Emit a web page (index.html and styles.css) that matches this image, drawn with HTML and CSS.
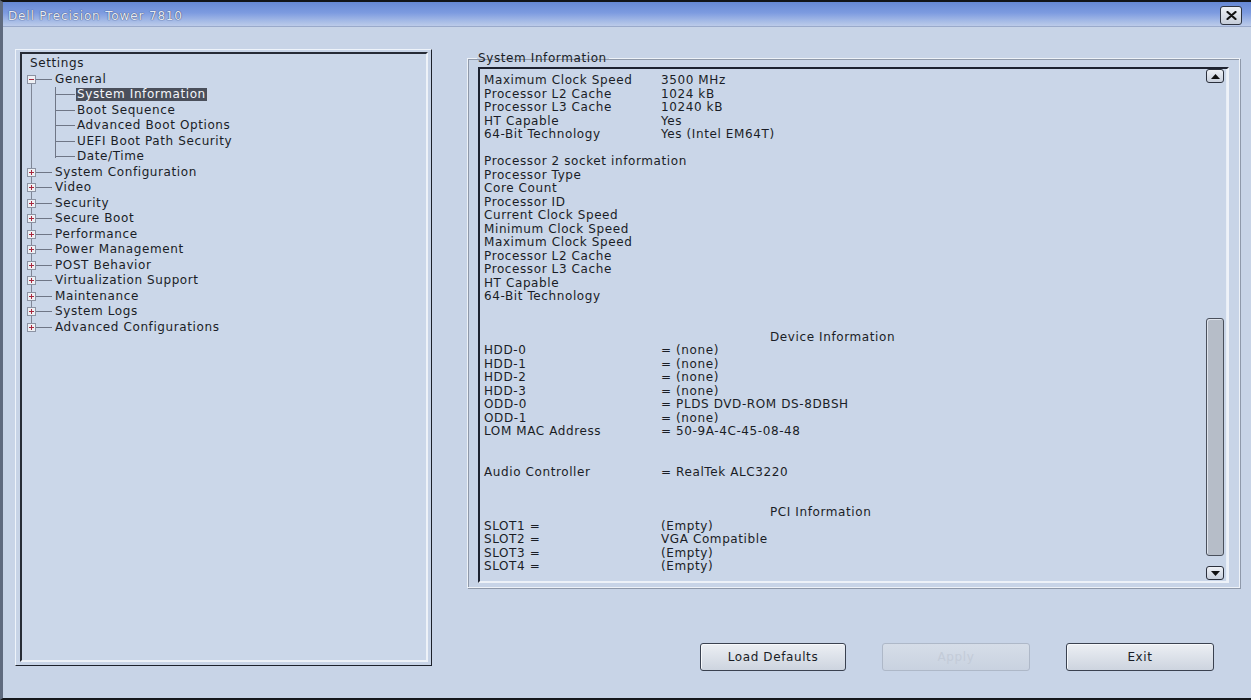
FILE: index.html
```html
<!DOCTYPE html>
<html lang="en">
<head>
<meta charset="utf-8">
<title>Dell Precision Tower 7810</title>
<link rel="stylesheet" href="styles.css">
</head>
<body>
<div class="screen">
  <div class="titlebar">
    <span class="title">Dell Precision Tower 7810</span>
    <button class="close" aria-label="Close">
      <svg width="11" height="9" viewBox="0 0 11 9"><path d="M1.5 1 L9.5 8 M9.5 1 L1.5 8" stroke="#111" stroke-width="2.2" stroke-linecap="round"/></svg>
    </button>
  </div>
  <div class="main">
    <div class="lpanel">
      <div class="lpanel-inner">
        <div class="tree-root">Settings</div>
        <div class="tree-level">
          <div class="row">
            <svg class="tg" width="9" height="9" viewBox="0 0 9 9"><rect x=".5" y=".5" width="8" height="8" fill="#eef0f4" stroke="#8b92a2"/><path d="M2 4.5h5" stroke="#a8283e"/></svg>
            <span class="hline"></span><span class="label">General</span>
          </div>
          <div class="children">
            <div class="row"><span class="hline2"></span><span class="label sel">System Information</span></div>
            <div class="row"><span class="hline2"></span><span class="label">Boot Sequence</span></div>
            <div class="row"><span class="hline2"></span><span class="label">Advanced Boot Options</span></div>
            <div class="row"><span class="hline2"></span><span class="label">UEFI Boot Path Security</span></div>
            <div class="row"><span class="hline2"></span><span class="label">Date/Time</span></div>
          </div>
          <div class="row"><svg class="tg" width="9" height="9" viewBox="0 0 9 9"><rect x=".5" y=".5" width="8" height="8" fill="#eef0f4" stroke="#8b92a2"/><path d="M2 4.5h5M4.5 2v5" stroke="#a8283e"/></svg><span class="hline"></span><span class="label">System Configuration</span></div>
          <div class="row"><svg class="tg" width="9" height="9" viewBox="0 0 9 9"><rect x=".5" y=".5" width="8" height="8" fill="#eef0f4" stroke="#8b92a2"/><path d="M2 4.5h5M4.5 2v5" stroke="#a8283e"/></svg><span class="hline"></span><span class="label">Video</span></div>
          <div class="row"><svg class="tg" width="9" height="9" viewBox="0 0 9 9"><rect x=".5" y=".5" width="8" height="8" fill="#eef0f4" stroke="#8b92a2"/><path d="M2 4.5h5M4.5 2v5" stroke="#a8283e"/></svg><span class="hline"></span><span class="label">Security</span></div>
          <div class="row"><svg class="tg" width="9" height="9" viewBox="0 0 9 9"><rect x=".5" y=".5" width="8" height="8" fill="#eef0f4" stroke="#8b92a2"/><path d="M2 4.5h5M4.5 2v5" stroke="#a8283e"/></svg><span class="hline"></span><span class="label">Secure Boot</span></div>
          <div class="row"><svg class="tg" width="9" height="9" viewBox="0 0 9 9"><rect x=".5" y=".5" width="8" height="8" fill="#eef0f4" stroke="#8b92a2"/><path d="M2 4.5h5M4.5 2v5" stroke="#a8283e"/></svg><span class="hline"></span><span class="label">Performance</span></div>
          <div class="row"><svg class="tg" width="9" height="9" viewBox="0 0 9 9"><rect x=".5" y=".5" width="8" height="8" fill="#eef0f4" stroke="#8b92a2"/><path d="M2 4.5h5M4.5 2v5" stroke="#a8283e"/></svg><span class="hline"></span><span class="label">Power Management</span></div>
          <div class="row"><svg class="tg" width="9" height="9" viewBox="0 0 9 9"><rect x=".5" y=".5" width="8" height="8" fill="#eef0f4" stroke="#8b92a2"/><path d="M2 4.5h5M4.5 2v5" stroke="#a8283e"/></svg><span class="hline"></span><span class="label">POST Behavior</span></div>
          <div class="row"><svg class="tg" width="9" height="9" viewBox="0 0 9 9"><rect x=".5" y=".5" width="8" height="8" fill="#eef0f4" stroke="#8b92a2"/><path d="M2 4.5h5M4.5 2v5" stroke="#a8283e"/></svg><span class="hline"></span><span class="label">Virtualization Support</span></div>
          <div class="row"><svg class="tg" width="9" height="9" viewBox="0 0 9 9"><rect x=".5" y=".5" width="8" height="8" fill="#eef0f4" stroke="#8b92a2"/><path d="M2 4.5h5M4.5 2v5" stroke="#a8283e"/></svg><span class="hline"></span><span class="label">Maintenance</span></div>
          <div class="row"><svg class="tg" width="9" height="9" viewBox="0 0 9 9"><rect x=".5" y=".5" width="8" height="8" fill="#eef0f4" stroke="#8b92a2"/><path d="M2 4.5h5M4.5 2v5" stroke="#a8283e"/></svg><span class="hline"></span><span class="label">System Logs</span></div>
          <div class="row"><svg class="tg" width="9" height="9" viewBox="0 0 9 9"><rect x=".5" y=".5" width="8" height="8" fill="#eef0f4" stroke="#8b92a2"/><path d="M2 4.5h5M4.5 2v5" stroke="#a8283e"/></svg><span class="hline"></span><span class="label">Advanced Configurations</span></div>
        </div>
      </div>
    </div>

    <div class="right">
      <fieldset class="group">
        <legend>System Information</legend>
        <div class="sysinfo">
          <div class="info">
            <div class="ir"><span class="k">Maximum Clock Speed</span><span>3500 MHz</span></div>
            <div class="ir"><span class="k">Processor L2 Cache</span><span>1024 kB</span></div>
            <div class="ir"><span class="k">Processor L3 Cache</span><span>10240 kB</span></div>
            <div class="ir"><span class="k">HT Capable</span><span>Yes</span></div>
            <div class="ir"><span class="k">64-Bit Technology</span><span>Yes (Intel EM64T)</span></div>
            <div class="ir"></div>
            <div class="ir">Processor 2 socket information</div>
            <div class="ir">Processor Type</div>
            <div class="ir">Core Count</div>
            <div class="ir">Processor ID</div>
            <div class="ir">Current Clock Speed</div>
            <div class="ir">Minimum Clock Speed</div>
            <div class="ir">Maximum Clock Speed</div>
            <div class="ir">Processor L2 Cache</div>
            <div class="ir">Processor L3 Cache</div>
            <div class="ir">HT Capable</div>
            <div class="ir">64-Bit Technology</div>
            <div class="ir"></div>
            <div class="ir"></div>
            <div class="ir head">Device Information</div>
            <div class="ir"><span class="k">HDD-0</span><span>= (none)</span></div>
            <div class="ir"><span class="k">HDD-1</span><span>= (none)</span></div>
            <div class="ir"><span class="k">HDD-2</span><span>= (none)</span></div>
            <div class="ir"><span class="k">HDD-3</span><span>= (none)</span></div>
            <div class="ir"><span class="k">ODD-0</span><span>= PLDS DVD-ROM DS-8DBSH</span></div>
            <div class="ir"><span class="k">ODD-1</span><span>= (none)</span></div>
            <div class="ir"><span class="k">LOM MAC Address</span><span>= 50-9A-4C-45-08-48</span></div>
            <div class="ir"></div>
            <div class="ir"></div>
            <div class="ir"><span class="k">Audio Controller</span><span>= RealTek ALC3220</span></div>
            <div class="ir"></div>
            <div class="ir"></div>
            <div class="ir head">PCI Information</div>
            <div class="ir"><span class="k">SLOT1 =</span><span>(Empty)</span></div>
            <div class="ir"><span class="k">SLOT2 =</span><span>VGA Compatible</span></div>
            <div class="ir"><span class="k">SLOT3 =</span><span>(Empty)</span></div>
            <div class="ir"><span class="k">SLOT4 =</span><span>(Empty)</span></div>
          </div>
          <div class="scrollbar">
            <div class="sbtn"><svg width="9" height="5" viewBox="0 0 9 5"><path d="M0 5 L4.5 0 L9 5Z" fill="#111"/></svg></div>
            <div class="track"><div class="thumb"></div></div>
            <div class="sbtn"><svg width="9" height="5" viewBox="0 0 9 5"><path d="M0 0 L4.5 5 L9 0Z" fill="#111"/></svg></div>
          </div>
        </div>
      </fieldset>
      <div class="buttons">
        <button class="btn w1">Load Defaults</button>
        <button class="btn disabled">Apply</button>
        <button class="btn">Exit</button>
      </div>
    </div>
  </div>
</div>
</body>
</html>
```

FILE: styles.css
```css
html, body {
  margin: 0;
  padding: 0;
  background: #c8d4e7;
}

.screen {
  width: 1251px;
  height: 700px;
  box-sizing: border-box;
  overflow: hidden;
  border-top: 2px solid #121418;
  border-left: 3px solid #5f6a7e;
  border-bottom: 2px solid #15171c;
  background: #c8d4e7;
  font-family: "DejaVu Sans", Verdana, sans-serif;
  font-size: 12px;
  letter-spacing: 0.6px;
  color: #1a1d26;
}

/* title bar */
.titlebar {
  height: 25px;
  box-sizing: border-box;
  display: flex;
  align-items: center;
  justify-content: space-between;
  padding: 0 9px 0 5px;
  background: linear-gradient(to bottom, #6688d4 0%, #7d9be0 45%, #a6bbe6 80%, #bccbe9 100%);
  border-bottom: 1px solid #9aaacb;
}
.title {
  color: #e6eaf2;
  font-size: 12px;
  letter-spacing: 0.85px;
  padding-top: 3px;
  text-shadow: 0 0 1px #3a4a78, 0 0 1px #3a4a78;
}
.close {
  width: 22px;
  height: 19px;
  margin-top: 2px;
  padding: 0;
  display: flex;
  align-items: center;
  justify-content: center;
  border: 1px solid #2d3340;
  border-radius: 3px;
  background: linear-gradient(to bottom, #eef1f6, #c6cdd9);
}

/* main area */
.main {
  display: flex;
  align-items: flex-start;
  padding: 22px 0 0 12px;
  gap: 35px;
}

/* left tree panel */
.lpanel {
  width: 417px;
  height: 617px;
  box-sizing: border-box;
  border: 1px solid;
  border-color: #eef3fa #1d212b #1d212b #eef3fa;
  padding: 2px 3px 3px 4px;
}
.lpanel-inner {
  height: 100%;
  box-sizing: border-box;
  border: 2px solid;
  border-color: #262b36 #eef2f8 #eef2f8 #262b36;
  background: #cbd7e9;
  padding: 2px 0 0 8px;
  line-height: 15.5px;
}
.tree-root {
  height: 15.5px;
}
.tree-level {
  margin-left: -3px;
  background: linear-gradient(#7f8696, #7f8696) no-repeat 4px 8px / 1px calc(100% - 16px);
}
.row {
  display: flex;
  align-items: center;
  height: 15.5px;
  white-space: nowrap;
}
.tg {
  flex: none;
  display: block;
}
.hline {
  flex: none;
  width: 16px;
  height: 1px;
  background: #6f7686;
  margin-right: 2px;
}
.children {
  margin-left: 28px;
  background: linear-gradient(#6f7686, #6f7686) no-repeat 0 0 / 1px calc(100% - 7px);
}
.hline2 {
  flex: none;
  width: 20px;
  height: 1px;
  background: #6f7686;
  margin-right: 1px;
}
.label {
  padding: 0 1px;
}
.label.sel {
  background: #4a4f5b;
  color: #f4f6fa;
  line-height: 13px;
}

/* right side */
.right {
  width: 773px;
  display: flex;
  flex-direction: column;
}
.group {
  margin: 2px 0 0 0;
  padding: 2px 10px 4px 10px;
  border: 1px solid #eef2f8;
  box-shadow: inset 1px 1px 0 #8f99aa, 1px 1px 0 #8f99aa;
  min-width: 0;
}
.group legend {
  margin-left: -1px;
  padding: 0 2px 0 1px;
  line-height: 14px;
}
.sysinfo {
  height: 516px;
  box-sizing: border-box;
  border: 2px solid;
  border-color: #1d2230 #eef2f8 #eef2f8 #1d2230;
  background: #cad6e8;
  display: flex;
}
.info {
  flex: 1;
  padding: 5px 0 0 4px;
  overflow: hidden;
  line-height: 13.5px;
}
.ir {
  display: flex;
  height: 13.5px;
  white-space: nowrap;
}
.ir .k {
  width: 177px;
  flex: none;
}
.ir.head {
  padding-left: 286px;
}

.scrollbar {
  width: 23px;
  flex: none;
  box-sizing: border-box;
  padding: 0 2px 1px 2px;
  display: flex;
  flex-direction: column;
  border-right: 1px solid #e8eef6;
}
.sbtn {
  height: 14px;
  box-sizing: border-box;
  border: 1px solid #2b303c;
  border-radius: 3px;
  background: linear-gradient(to bottom, #eef1f6, #c9d0dc);
  display: flex;
  align-items: center;
  justify-content: center;
}
.track {
  flex: 1;
  display: flex;
  flex-direction: column;
}
.thumb {
  margin-top: 235px;
  height: 238px;
  box-sizing: border-box;
  border: 1px solid #4a505c;
  border-radius: 3px;
  background: #b6bdc8;
  box-shadow: inset 1px 1px 0 #dfe4ec;
}

.buttons {
  display: flex;
  justify-content: flex-end;
  gap: 36px;
  padding-right: 26px;
  margin-top: 55px;
}
.btn {
  width: 148px;
  height: 28px;
  padding: 0;
  font-family: "DejaVu Sans", Verdana, sans-serif;
  font-size: 12px;
  letter-spacing: 0.6px;
  color: #1a1d26;
  border: 1px solid #3a4150;
  border-radius: 3px;
  background: linear-gradient(to bottom, #eceff4, #cdd4df);
  box-shadow: inset 1px 1px 0 #f7f9fc;
}
.btn.w1 {
  width: 146px;
}
.btn.disabled {
  color: #c3cbd8;
  border-color: #aeb8c8;
  background: linear-gradient(to bottom, #d6dde8, #c9d2e0);
  box-shadow: none;
}
```
